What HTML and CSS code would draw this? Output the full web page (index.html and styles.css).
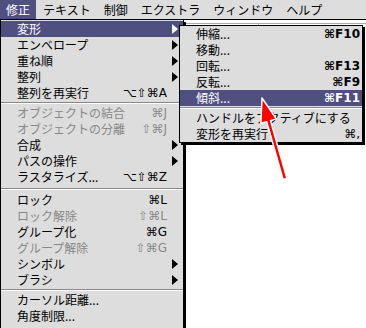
FILE: index.html
```html
<!DOCTYPE html>
<html lang="ja">
<head>
    <meta charset="UTF-8">
    <title>修正メニュー</title>
    <link rel="stylesheet" href="styles.css">
</head>
<body>

    <div class="menubar">
        <span class="active">修正</span>
        <span>テキスト</span>
        <span>制御</span>
        <span>エクストラ</span>
        <span>ウィンドウ</span>
        <span>ヘルプ</span>
    </div>

    <div class="desk">
        <div class="menu main">
            <div class="item on"><span>変形</span><span></span><span class="more"></span></div>
            <div class="item"><span>エンベロープ</span><span></span><span class="more"></span></div>
            <div class="item"><span>重ね順</span><span></span><span class="more"></span></div>
            <div class="item"><span>整列</span><span></span><span class="more"></span></div>
            <div class="item"><span>整列を再実行</span><span class="key">⌥⇧⌘A</span><span></span></div>
            <div class="sep"></div>
            <div class="item off"><span>オブジェクトの結合</span><span class="key">⌘J</span><span></span></div>
            <div class="item off"><span>オブジェクトの分離</span><span class="key">⇧⌘J</span><span></span></div>
            <div class="item"><span>合成</span><span></span><span class="more"></span></div>
            <div class="item"><span>パスの操作</span><span></span><span class="more"></span></div>
            <div class="item"><span>ラスタライズ...</span><span class="key">⌥⇧⌘Z</span><span></span></div>
            <div class="sep wide"></div>
            <div class="item"><span>ロック</span><span class="key">⌘L</span><span></span></div>
            <div class="item off"><span>ロック解除</span><span class="key">⇧⌘L</span><span></span></div>
            <div class="item"><span>グループ化</span><span class="key">⌘G</span><span></span></div>
            <div class="item off"><span>グループ解除</span><span class="key">⇧⌘G</span><span></span></div>
            <div class="item"><span>シンボル</span><span></span><span class="more"></span></div>
            <div class="item"><span>ブラシ</span><span></span><span class="more"></span></div>
            <div class="sep"></div>
            <div class="item"><span>カーソル距離...</span><span></span><span></span></div>
            <div class="item"><span>角度制限...</span><span></span><span></span></div>
        </div>

        <div class="doc">
            <div class="ruler"><span class="tick"></span></div>
        </div>
    </div>

    <div class="menu sub">
        <div class="item"><span>伸縮...</span><span class="key">⌘F10</span></div>
        <div class="item"><span>移動...</span><span></span></div>
        <div class="item"><span>回転...</span><span class="key">⌘F13</span></div>
        <div class="item"><span>反転...</span><span class="key">⌘F9</span></div>
        <div class="item on"><span>傾斜...</span><span class="key">⌘F11</span></div>
        <div class="sep"></div>
        <div class="item"><span>ハンドルをアクティブにする</span><span></span></div>
        <div class="item"><span>変形を再実行</span><span class="key plain">⌘,</span></div>
    </div>

    <!-- red pointer drawn over the menus -->
    <svg class="pointer" width="366" height="328" viewBox="0 0 366 328">
        <polygon points="262,98 276.3,118.9 270.5,120.6 286.9,178.5 283.1,179.5 266.7,121.6 260.9,123.3"
                 fill="#f00" stroke="#fff" stroke-width="1.5" stroke-linejoin="round"/>
    </svg>

</body>
</html>
```

FILE: styles.css
```css
body {
    margin: 0;
    width: 366px;
    height: 328px;
    overflow: hidden;
    position: relative;
    background-color: #fff;
    font-family: "Noto Sans CJK JP", sans-serif;
    font-size: 12px;
    color: #000;
}

.menubar {
    display: flex;
    height: 19px;
    background-color: #ddd;
    border-bottom: 1px solid #000;
}

.menubar span {
    padding: 0 6px;
    margin-right: 1px;
    line-height: 19px;
}

.menubar .active {
    background-color: #4f4f80;
    color: #fff;
}

.desk {
    display: flex;
}

.menu {
    background-color: #ddd;
    border: 1px solid #000;
    box-shadow: 2px 2px 0 #000;
    box-sizing: border-box;
}

.main {
    width: 184px;
    border-top: none;
    padding-top: 1px;
    margin-right: 2px;
}

.item {
    display: grid;
    grid-template-columns: 1fr auto 16px;
    align-items: center;
    height: 16px;
    line-height: 16px;
    padding-left: 16px;
    white-space: nowrap;
}

.item.on {
    background-color: #4f4f80;
    color: #fff;
}

.item.off {
    color: #888;
}

.key {
    font-family: "DejaVu Sans", "Noto Sans CJK JP", sans-serif;
    font-size: 12px;
}

.more {
    width: 0;
    height: 0;
    margin-left: 5px;
    border-left: 6px solid #000;
    border-top: 5px solid transparent;
    border-bottom: 5px solid transparent;
}

.item.on .more {
    border-left-color: #fff;
}

.sep {
    height: 4px;
    display: flex;
    flex-direction: column;
    justify-content: center;
}

.sep::before {
    content: "";
    border-top: 1px solid #888;
    border-bottom: 1px solid #fff;
}

.sep.wide {
    height: 7px;
}

.doc {
    flex: 1;
    height: 308px;
    padding-top: 3px;
    background-color: #fff;
}

.ruler {
    position: relative;
    border-top: 1px solid #aaa;
}

.tick {
    display: block;
    width: 1px;
    height: 3px;
    margin-left: 72px;
    background-color: #aaa;
}

.sub {
    position: absolute;
    left: 179px;
    top: 25px;
    width: 184px;
}

.sub .item {
    grid-template-columns: 1fr auto;
    padding-right: 2px;
}

.sub .key {
    font-weight: bold;
}

.sub .key.plain {
    font-weight: normal;
}

.pointer {
    position: absolute;
    left: 0;
    top: 0;
    pointer-events: none;
}
```
